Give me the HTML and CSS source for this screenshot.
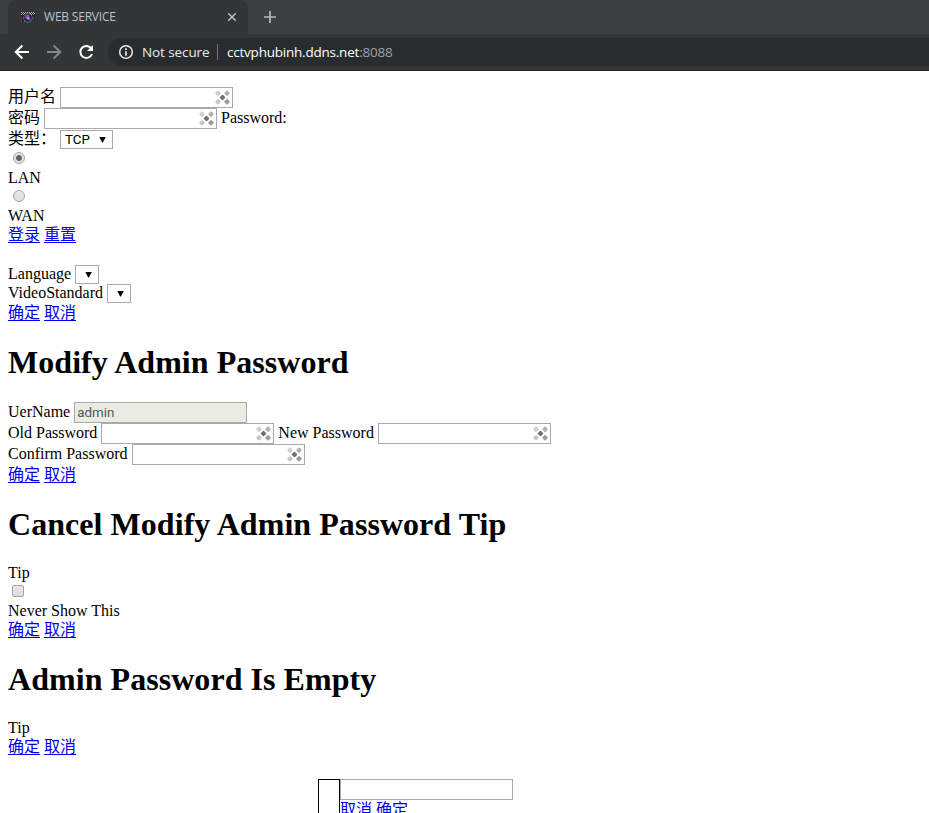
FILE: index.html
```
<!DOCTYPE html>
<html lang="en">
<head>
<meta charset="utf-8">
<title>WEB SERVICE</title>
<link rel="stylesheet" href="styles.css">
</head>
<body>
<svg class="defs" width="0" height="0">
  <symbol id="key" viewBox="0 0 16 16">
    <g stroke-width="1.600" stroke-linejoin="round">
      <path fill="#cfcfcf" stroke="#cfcfcf" d="M3 1.200l2 2-2 2-2-2z"/>
      <path fill="#b0b0b0" stroke="#b0b0b0" d="M12 1.200l2 2-2 2-2-2z"/>
      <path fill="#c6c6c6" stroke="#c6c6c6" d="M3 9.800l2 2-2 2-2-2z"/>
      <path fill="#9c9c9c" stroke="#9c9c9c" d="M12 9.800l2 2-2 2-2-2z"/>
      <path fill="#707070" stroke="#707070" d="M7.500 5.500l2 2-2 2-2-2z"/>
    </g>
  </symbol>
</svg>
<header class="browser">
  <div class="tabs">
    <div class="tab">
      <svg class="favicon" width="16" height="16" viewBox="0 0 16 16">
        <path fill="#25262a" d="M1 3h14v10H1z"/>
        <path stroke="#b5b5b5" stroke-width="1" stroke-dasharray="1 1" d="M1 3.500h14M2 4.500h13"/>
        <path stroke="#8a8a8e" stroke-dasharray="1 1" d="M1 5.500h14"/>
        <path stroke="#606066" stroke-dasharray="1 2" d="M1 8.500h14M1 10.500h14M1 12.500h14"/>
        <circle cx="8" cy="9" r="4.300" fill="#231f3c" stroke="#666878"/>
        <circle cx="7.300" cy="8" r="2.200" fill="#a53fae"/>
        <circle cx="9" cy="10" r="1.700" fill="#3d6aae"/>
        <circle cx="8" cy="9" r=".8" fill="#dfe4ff"/>
      </svg>
      <span class="tab-title">WEB SERVICE</span>
      <svg class="close" width="10" height="10" viewBox="0 0 10 10"><path d="M1.200 1.200l7.600 7.600M8.800 1.200L1.200 8.800" stroke="#bdc1c6" stroke-width="1.500"/></svg>
    </div>
    <svg class="plus" width="12" height="12" viewBox="0 0 12 12"><path d="M6 0v12M0 6h12" stroke="#b5b8bb" stroke-width="1.700"/></svg>
  </div>
  <div class="toolbar">
    <svg class="nav" width="16" height="16" viewBox="0 0 16 16" fill="none" stroke="#fff" stroke-width="2"><path d="M15 8H2M8.300 1.500L1.800 8l6.500 6.500"/></svg>
    <svg class="nav" width="16" height="16" viewBox="0 0 16 16" fill="none" stroke="#85888b" stroke-width="2"><path d="M1 8h13M7.700 1.500L14.200 8l-6.500 6.500"/></svg>
    <svg class="nav" width="16" height="16" viewBox="0 0 16 16"><path d="M13.300 4.500A6 6 0 1 0 14 10" fill="none" stroke="#fff" stroke-width="2"/><path d="M15 1v6H9z" fill="#fff"/></svg>
    <div class="address">
      <svg width="16" height="16" viewBox="0 0 16 16"><circle cx="8" cy="8" r="6.300" fill="none" stroke="#e8eaed" stroke-width="1.500"/><path d="M8 4.200v1.700M8 7.200v4.500" stroke="#e8eaed" stroke-width="1.700"/></svg>
      <span class="secure">Not secure</span>
      <span class="divider"></span>
      <span class="url">cctvphubinh.ddns.net<span class="port">:8088</span></span>
    </div>
  </div>
</header>
<main>
  <section class="login">
    <div class="row tall"><span class="label">用户名</span><span class="field"><svg><use href="#key"/></svg></span></div>
    <div class="row tall"><span class="label">密码</span><span class="field"><svg><use href="#key"/></svg></span><span class="label">Password:</span></div>
    <div class="row tall"><span class="label">类型：</span><span class="select tcp">TCP<i></i></span></div>
    <div class="row toggle"><span class="radio checked"></span></div>
    <div class="row text">LAN</div>
    <div class="row text"><span class="radio second"></span></div>
    <div class="row text">WAN</div>
    <div class="row links"><a href="#">登录</a><a href="#">重置</a></div>
  </section>
  <section class="settings">
    <div class="row text"><span class="label">Language</span><span class="select"><i></i></span></div>
    <div class="row text"><span class="label">VideoStandard</span><span class="select"><i></i></span></div>
    <div class="row links"><a href="#">确定</a><a href="#">取消</a></div>
  </section>
  <section>
    <h1>Modify Admin Password</h1>
    <div class="row tall"><span class="label">UerName</span><span class="field disabled">admin</span></div>
    <div class="row tall"><span class="label">Old Password</span><span class="field"><svg><use href="#key"/></svg></span><span class="label">New Password</span><span class="field"><svg><use href="#key"/></svg></span></div>
    <div class="row tall"><span class="label">Confirm Password</span><span class="field"><svg><use href="#key"/></svg></span></div>
    <div class="row links"><a href="#">确定</a><a href="#">取消</a></div>
  </section>
  <section>
    <h1>Cancel Modify Admin Password Tip</h1>
    <div class="row links">Tip</div>
    <div class="row text"><span class="checkbox"></span></div>
    <div class="row text">Never Show This</div>
    <div class="row links"><a href="#">确定</a><a href="#">取消</a></div>
  </section>
  <section>
    <h1>Admin Password Is Empty</h1>
    <div class="row links">Tip</div>
    <div class="row links"><a href="#">确定</a><a href="#">取消</a></div>
  </section>
  <section class="dialog">
    <div class="frame"></div>
    <div>
      <div class="field"></div>
      <div class="row links"><a href="#">取消</a><a href="#">确定</a></div>
    </div>
  </section>
</main>
</body>
</html>
```
FILE: styles.css
```
* { box-sizing: border-box; }
html, body { height: 813px; overflow: hidden; }
body {
  margin: 0;
  background: #fff;
  color: #000;
  font: 16px "Liberation Serif", "Noto Sans CJK SC", serif;
}
.defs { display: block; }
.browser {
  height: 71px;
  background: #3c4043;
  border-bottom: 1px solid #222428;
  font-family: "Open Sans", "Noto Sans", sans-serif;
}
.tabs { display: flex; height: 34px; padding-left: 8px; }
.tab {
  display: flex;
  align-items: center;
  width: 240px;
  padding: 0 11px 0 12px;
  background: #323639;
  border-radius: 8px 8px 0 0;
}
.tab-title { flex: 1; margin: 0 0 2px 8px; color: #bdc1c6; font-size: 12px; letter-spacing: -.2px; white-space: nowrap; }
.plus { margin: 11px 0 0 16px; }
.toolbar { display: flex; align-items: center; height: 36px; padding-left: 14px; background: #323639; }
.nav { flex: none; margin-right: 16px; }
.address {
  display: flex;
  align-items: center;
  flex: 1;
  height: 28px;
  margin-left: -2px;
  padding-left: 10px;
  background: #282c2f;
  border-radius: 14px 0 0 14px;
  color: #e8eaed;
  font-size: 14px;
}
.secure { width: 67px; margin-left: 8px; font-size: 13.500px; letter-spacing: -.1px; white-space: nowrap; }
.divider { width: 1px; height: 16px; margin: 0 9px 0 8px; background: #777b7f; }
.url { font-size: 13.500px; letter-spacing: -.22px; color: #fff; }
.port { color: #9aa0a6; }
main { padding: 16px 8px 0; }
.row { display: flex; align-items: center; gap: 4px; white-space: nowrap; line-height: 18px; }
.tall { height: 21px; }
.text { height: 19px; }
.toggle { height: 18px; padding-bottom: 2px; }
.links { height: 18px; }
.label { margin-bottom: 2px; line-height: 18px; }
a { height: 18px; margin-top: 2px; color: #00e; line-height: 18px; text-decoration: underline; text-underline-offset: 2px; }
.field {
  display: flex;
  align-items: center;
  justify-content: flex-end;
  width: 173px;
  height: 21px;
  padding-right: 1px;
  border: 1px solid #a9a9a9;
  background: #fff;
}
.field svg { width: 16px; height: 16px; }
.disabled { justify-content: flex-start; padding-left: 2px; background: #ebebe4; color: #545454; font: 13.333px Roboto, sans-serif; }
.select {
  display: flex;
  align-items: center;
  justify-content: flex-end;
  width: 24px;
  height: 19px;
  padding-right: 6px;
  border: 1px solid #a9a9a9;
  font: 13.333px Roboto, sans-serif;
}
.tcp { justify-content: space-between; width: 53px; padding-left: 4px; }
.select i { width: 7px; height: 6px; background: #000; clip-path: polygon(0 0, 100% 0, 55% 100%, 45% 100%); }
.radio, .checkbox { border: 1px solid #a6a6a6; background: linear-gradient(#e8e8e8, #dcdcdc); }
.radio { width: 12px; height: 12px; margin-left: 5px; border-radius: 50%; }
.second { margin-bottom: 2px; }
.checked { background: radial-gradient(circle, #606060 0 2.500px, #e2e2e2 3.300px); }
.checkbox { width: 12px; height: 12px; margin: 0 0 2px 4px; border-radius: 2px; }
.settings { margin-top: 22px; }
h1 { height: 37px; margin: 23px 0 21px; font-size: 32px; letter-spacing: .05px; line-height: 37px; white-space: nowrap; }
.dialog { display: flex; margin: 24px 0 0 310px; }
.frame { width: 22px; height: 60px; border: 1px solid #000; }
```
